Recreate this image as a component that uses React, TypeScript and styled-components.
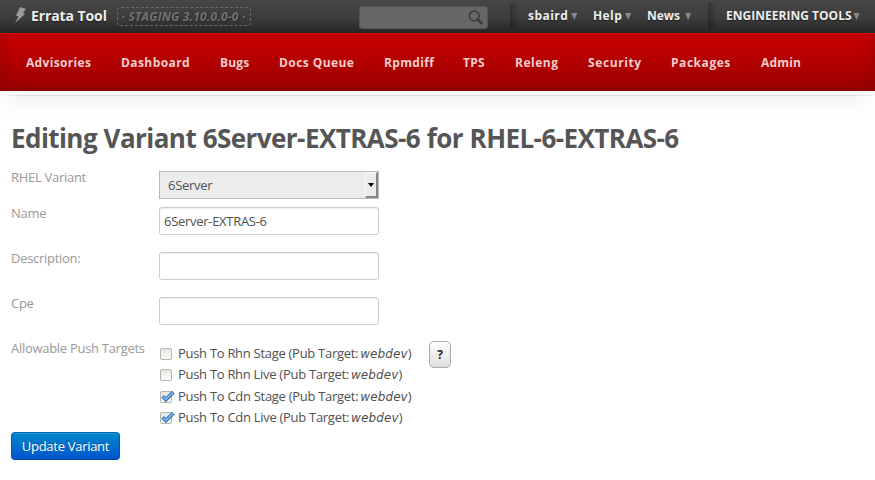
import React from "react";
import styled, { createGlobalStyle, css } from "styled-components";

const GlobalStyle = createGlobalStyle`
  * { box-sizing: border-box; }
  body {
    margin: 0;
    background: #fff;
    color: #505050;
    font: 13px/18px "Open Sans", "Noto Sans", sans-serif;
    letter-spacing: -0.29px;
  }
`;

const TopBar = styled.header`
  display: flex;
  height: 33px;
  padding-left: 14px;
  background: linear-gradient(#474747, #3c3c3c 55%, #262626);
  color: #eee;
  font-weight: 700;
  letter-spacing: 0;
  text-shadow: 0 1px 1px rgba(0, 0, 0, 0.5);
`;

const Brand = styled.div`
  display: flex;
  width: 103px;
  font-size: 14px;
  line-height: 32px;
  letter-spacing: -0.1px;
  white-space: nowrap;

  svg { flex: none; margin: 7px 4px 0 0; }
`;

const Staging = styled.div`
  display: flex;
  width: 134px;
  height: 19px;
  margin-top: 7px;
  padding-right: 1px;
  border: 1px dashed #6b6b6b;
  border-radius: 4px;
  color: #727272;
  font-size: 12px;
  font-style: italic;
  line-height: 18px;
  letter-spacing: 0.2px;
  justify-content: center;
  white-space: nowrap;
  text-shadow: 1px 1px 2px rgba(0, 0, 0, 0.4);
`;

const Search = styled.div`
  display: flex;
  justify-content: flex-end;
  width: 129px;
  height: 23px;
  margin: 6px 22px 0 108px;
  padding: 3px 4px;
  border: 1px solid #565656;
  border-radius: 3px;
  background: #666;
`;

const MenuGroup = styled.nav<{ $width: number }>`
  display: flex;
  width: ${(p) => p.$width}px;
  padding-left: 18px;
  background: linear-gradient(90deg, rgba(0, 0, 0, 0.26), transparent 9px) no-repeat 0 3px / 10px 26px;
`;

const MenuItem = styled.div<{ $width: number; $spacing?: number; $gap?: number }>`
  display: flex;
  flex: none;
  width: ${(p) => p.$width}px;
  font-size: 12px;
  line-height: 32px;
  letter-spacing: ${(p) => p.$spacing ?? 0}px;
  white-space: nowrap;

  &::after {
    content: "";
    margin: 13px 0 0 ${(p) => p.$gap ?? 3}px;
    width: 6px;
    height: 7px;
    background: #8a8a8a;
    clip-path: polygon(0 0, 100% 0, 50% 100%);
  }
`;

const NavBar = styled.nav`
  display: flex;
  height: 58px;
  padding-left: 26px;
  background: linear-gradient(#ca0000, #9c0000 54px);
  border-top: 1px solid #d20a0a;
  border-bottom: 3px solid #900000;
  box-shadow: inset 14px 0 16px -12px rgba(120, 0, 0, 0.35), inset -14px 0 16px -12px rgba(120, 0, 0, 0.35);
`;

const NavItem = styled.div<{ $width: number; $spacing: number }>`
  flex: none;
  width: ${(p) => p.$width}px;
  color: #f4cccc;
  font-size: 12px;
  font-weight: 700;
  line-height: 57px;
  letter-spacing: ${(p) => p.$spacing}px;
  white-space: nowrap;
`;

const Page = styled.main`
  padding: 25px 11px 0;
  height: 389px;
  border-top: 4px solid #f9f9f9;
  background:
    linear-gradient(90deg, rgba(255, 255, 255, 0.8), transparent 20px, transparent 855px, rgba(255, 255, 255, 0.8)) no-repeat 0 0 / 100% 24px,
    linear-gradient(#ddd 1px, #f5f5f5 1px, #fff 22px) no-repeat 0 0 / 100% 22px,
    #fff;
`;

const Title = styled.h1`
  margin: 0 0 11px;
  color: #555;
  font-size: 26px;
  line-height: 37px;
  font-weight: 700;
  letter-spacing: -0.56px;
  word-spacing: 0.4px;
  white-space: nowrap;
`;

const Row = styled.div<{ $height: number }>`
  display: grid;
  grid-template-columns: 148px auto 1fr;
  align-items: start;
  height: ${(p) => p.$height}px;
`;

const Label = styled.label`
  color: #999;
  white-space: nowrap;
`;

const control = css`
  width: 220px;
  height: 28px;
  margin-top: 3px;
  color: #505050;
  font: inherit;
  letter-spacing: inherit;
`;

const TextInput = styled.input`
  ${control}
  padding: 0 4px;
  border: 1px solid #ccc;
  border-radius: 3px;
  background: #fff;
  box-shadow: inset 0 1px 1px rgba(0, 0, 0, 0.075);
`;

const SelectBox = styled.div`
  ${control}
  display: flex;
  justify-content: space-between;
  padding-left: 8px;
  border: 1px solid #b9b9b9;
  background: #ececec;
  line-height: 27px;
`;

const SelectArrow = styled.span`
  display: flex;
  align-items: center;
  justify-content: center;
  width: 13px;
  height: 26px;
  border: solid;
  border-width: 1px 2px 2px 1px;
  border-color: #fafafa #858585 #858585 #fafafa;
  background: #ececec;
`;

const Targets = styled.div`
  padding-top: 4px;
  width: 270px;
`;

const Target = styled.div<{ $height: number }>`
  display: flex;
  height: ${(p) => p.$height}px;
  line-height: 21px;
  white-space: nowrap;

  em {
    margin: 1px 0 0 2px;
    font: italic 12px/21px "DejaVu Sans", sans-serif;
    letter-spacing: 0.1px;
  }
`;

const CheckIcon = styled.svg`
  flex: none;
  width: 16px;
  height: 14px;
  margin: 4px 3px 0 0;
`;

const HelpButton = styled.button`
  width: 22px;
  height: 27px;
  margin-top: 2px;
  padding: 0;
  border: 1px solid #aaa;
  border-radius: 5px;
  background: linear-gradient(#fff, #dedede);
  color: #222;
  font: 700 12px/25px "Open Sans", sans-serif;
`;

const SubmitButton = styled.button`
  display: block;
  width: 109px;
  height: 28px;
  margin-top: 1px;
  padding: 0 0 1px;
  border: 1px solid #0055b3;
  border-color: #0064b0 #0057b8 #00469c;
  border-radius: 4px;
  background: linear-gradient(#0088cc, #0055cc);
  box-shadow: inset 0 1px 0 rgba(255, 255, 255, 0.12);
  color: #fff;
  font: 13px/26px "Open Sans", sans-serif;
  letter-spacing: -0.29px;
  text-shadow: 0 -1px 0 rgba(0, 0, 0, 0.25);
`;

const navItems: [string, number, number][] = [
  ["Advisories", 95, 0.33],
  ["Dashboard", 99, 0.42],
  ["Bugs", 59, 0.2],
  ["Docs Queue", 105, 0.42],
  ["Rpmdiff", 79, 0.35],
  ["TPS", 52, 0.2],
  ["Releng", 73, 0.5],
  ["Security", 83, 0.6],
  ["Packages", 90, 0.55],
  ["Admin", 60, 0.2],
];

const targets: [string, boolean, number][] = [
  ["Rhn Stage", false, 21],
  ["Rhn Live", false, 22],
  ["Cdn Stage", true, 21],
  ["Cdn Live", true, 21],
];

function Check({ on }: { on: boolean }) {
  return (
    <CheckIcon viewBox="0 0 16 14">
      <defs>
        <linearGradient id="box" x2="0" y2="1">
          <stop stopColor="#e4e4df" />
          <stop offset="1" stopColor="#fff" />
        </linearGradient>
      </defs>
      <rect x="1.5" y="1.5" width="11" height="11" rx="1.5" fill="url(#box)" stroke="#b3b6aa" />
      {on && (
        <>
          <path d="M3.6 6.2 6.8 9.6 14.4 2.2" fill="none" stroke="#2f6cb5" strokeWidth="3.8" />
          <path d="M4.1 6.7 6.8 9.4 14 2.6" fill="none" stroke="#7db1ea" strokeWidth="2" />
        </>
      )}
    </CheckIcon>
  );
}

export default function App() {
  return (
    <>
      <GlobalStyle />
      <TopBar>
        <Brand>
          <svg width="13" height="16" viewBox="0 0 13 16">
            <path d="M6 0 12 2 9 6 11 7 1 16 4.5 9.5 2 8.5Z" fill="#9b9b9b" />
          </svg>
          Errata Tool
        </Brand>
        <Staging>· STAGING 3.10.0.0-0 ·</Staging>
        <Search>
          <svg width="15" height="16" viewBox="0 0 15 16" fill="none" stroke="#3d3d3d">
            <circle cx="6.2" cy="6" r="4.9" strokeWidth="1.7" />
            <path d="m10 9.8 3.5 3.2" strokeWidth="2.8" strokeLinecap="round" />
          </svg>
        </Search>
        <MenuGroup $width={198}>
          <MenuItem $width={65} $spacing={0.45}>sbaird</MenuItem>
          <MenuItem $width={54} $spacing={0.4}>Help</MenuItem>
          <MenuItem $width={50} $gap={5}>News</MenuItem>
        </MenuGroup>
        <MenuGroup $width={167}>
          <MenuItem $width={140} $gap={2} $spacing={0.02}>ENGINEERING TOOLS</MenuItem>
        </MenuGroup>
      </TopBar>
      <NavBar>
        {navItems.map(([name, width, spacing]) => (
          <NavItem key={name} $width={width} $spacing={spacing}>{name}</NavItem>
        ))}
      </NavBar>
      <Page>
        <Title>Editing Variant 6Server-EXTRAS-6 for RHEL-6-EXTRAS-6</Title>
        <Row $height={36}>
          <Label>RHEL Variant</Label>
          <SelectBox>
            6Server
            <SelectArrow>
              <svg width="6" height="4" viewBox="0 0 6 4"><path d="M0 0h6L3 4Z" /></svg>
            </SelectArrow>
          </SelectBox>
        </Row>
        <Row $height={45}>
          <Label>Name</Label>
          <TextInput defaultValue="6Server-EXTRAS-6" />
        </Row>
        <Row $height={45}>
          <Label>Description:</Label>
          <TextInput />
        </Row>
        <Row $height={45}>
          <Label>Cpe</Label>
          <TextInput />
        </Row>
        <Row $height={92}>
          <Label>Allowable Push Targets</Label>
          <Targets>
            {targets.map(([name, on, height]) => (
              <Target key={name} $height={height}>
                <Check on={on} />
                Push To {name} (Pub Target: <em>webdev</em>)
              </Target>
            ))}
          </Targets>
          <HelpButton>?</HelpButton>
        </Row>
        <SubmitButton>Update Variant</SubmitButton>
      </Page>
    </>
  );
}
